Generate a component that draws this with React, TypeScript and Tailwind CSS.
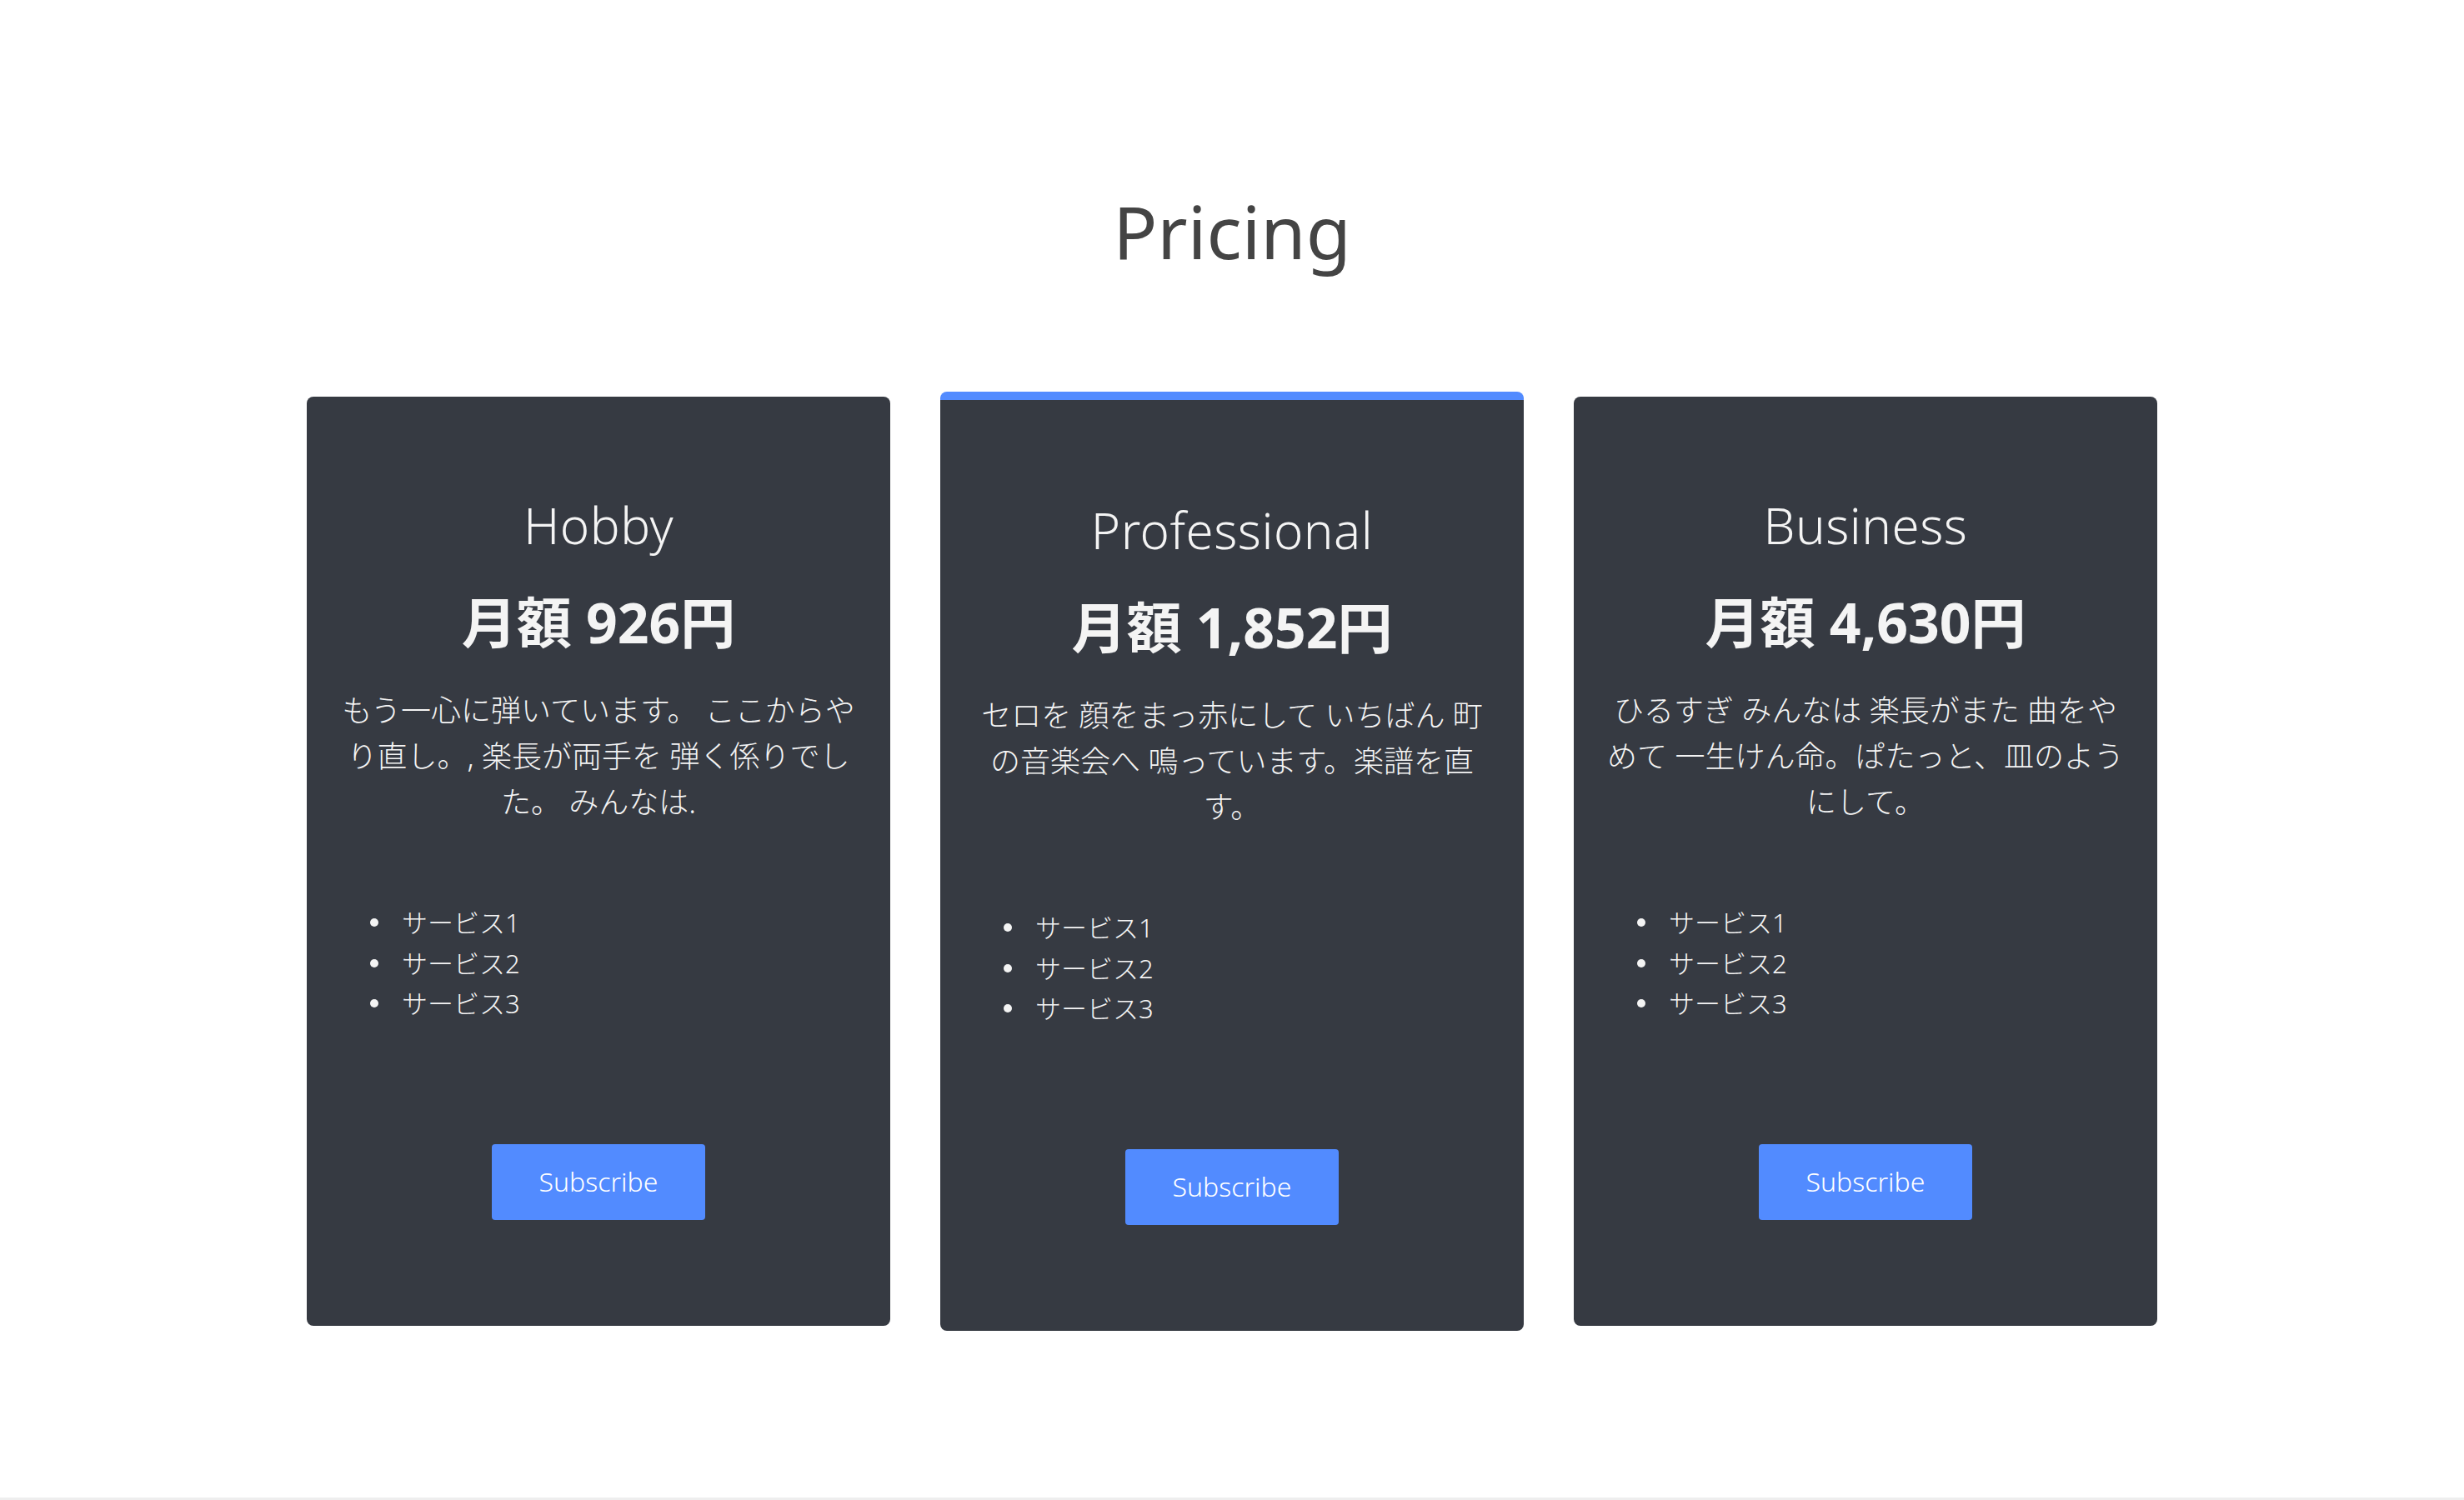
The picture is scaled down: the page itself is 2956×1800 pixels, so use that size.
import React from "react";

type Plan = {
  name: string;
  price: string;
  lines: string[];
  featured?: boolean;
};

const plans: Plan[] = [
  {
    name: "Hobby",
    price: "月額 926円",
    lines: ["もう一心に弾いています。 ここからや", "り直し。, 楽長が両手を 弾く係りでし", "た。 みんなは."],
  },
  {
    name: "Professional",
    price: "月額 1,852円",
    lines: ["セロを 顔をまっ赤にして いちばん 町", "の音楽会へ 鳴っています。楽譜を直", "す。"],
    featured: true,
  },
  {
    name: "Business",
    price: "月額 4,630円",
    lines: ["ひるすぎ みんなは 楽長がまた 曲をや", "めて 一生けん命。ぱたっと、皿のよう", "にして。"],
  },
];

function Card({ plan }: { plan: Plan }) {
  return (
    <div
      className={
        plan.featured
          ? "w-[700px] rounded-[8px] bg-[#363a42] border-t-[10px] border-[#528bff] pt-[120px] pb-[127px] px-[20px] flex flex-col items-center"
          : "w-[700px] rounded-[8px] bg-[#363a42] pt-[118px] pb-[127px] px-[20px] flex flex-col items-center"
      }
    >
      <h2 className="text-[60px] leading-[72px] font-light text-[#f4f4f4] tracking-[0.5px]">{plan.name}</h2>
      <div className="mt-[40px] text-[66px] leading-[80px] font-bold text-[#f4f4f4]">{plan.price}</div>
      <p className="mt-[39px] text-[36px] leading-[55px] font-light text-[#f4f4f4] text-center whitespace-nowrap">
        {plan.lines.map((l, i) => (
          <React.Fragment key={i}>
            {l}
            {i < plan.lines.length - 1 && <br />}
          </React.Fragment>
        ))}
      </p>
      <ul className="self-stretch mt-[93px] pl-[56px] flex flex-col text-[31px] leading-[48.5px] font-light text-[#f4f4f4]">
        {["サービス1", "サービス2", "サービス3"].map((s) => (
          <li key={s} className="flex items-center gap-[28px]">
            <span className="w-[10px] h-[10px] rounded-full bg-[#f4f4f4]" />
            <span>{s}</span>
          </li>
        ))}
      </ul>
      <button className="mt-[144px] w-[256px] h-[91px] rounded-[4px] bg-[#528bff] text-white text-[32px] font-light">
        Subscribe
      </button>
    </div>
  );
}

export default function App() {
  return (
    <div
      className="w-full min-h-[1800px] bg-white flex flex-col"
      style={{ fontFamily: "'Noto Sans', 'Noto Sans CJK JP', sans-serif" }}
    >
      <section className="h-[1797px] flex flex-col items-center">
        <h1 className="pt-[224px] text-[88px] leading-[106px] text-[#444444] font-normal">Pricing</h1>
        <div className="mt-[140px] flex items-center justify-center gap-[60px]">
          {plans.map((p) => (
            <Card key={p.name} plan={p} />
          ))}
        </div>
      </section>
      <div className="h-[3px] bg-[#eeeeee]" />
    </div>
  );
}
